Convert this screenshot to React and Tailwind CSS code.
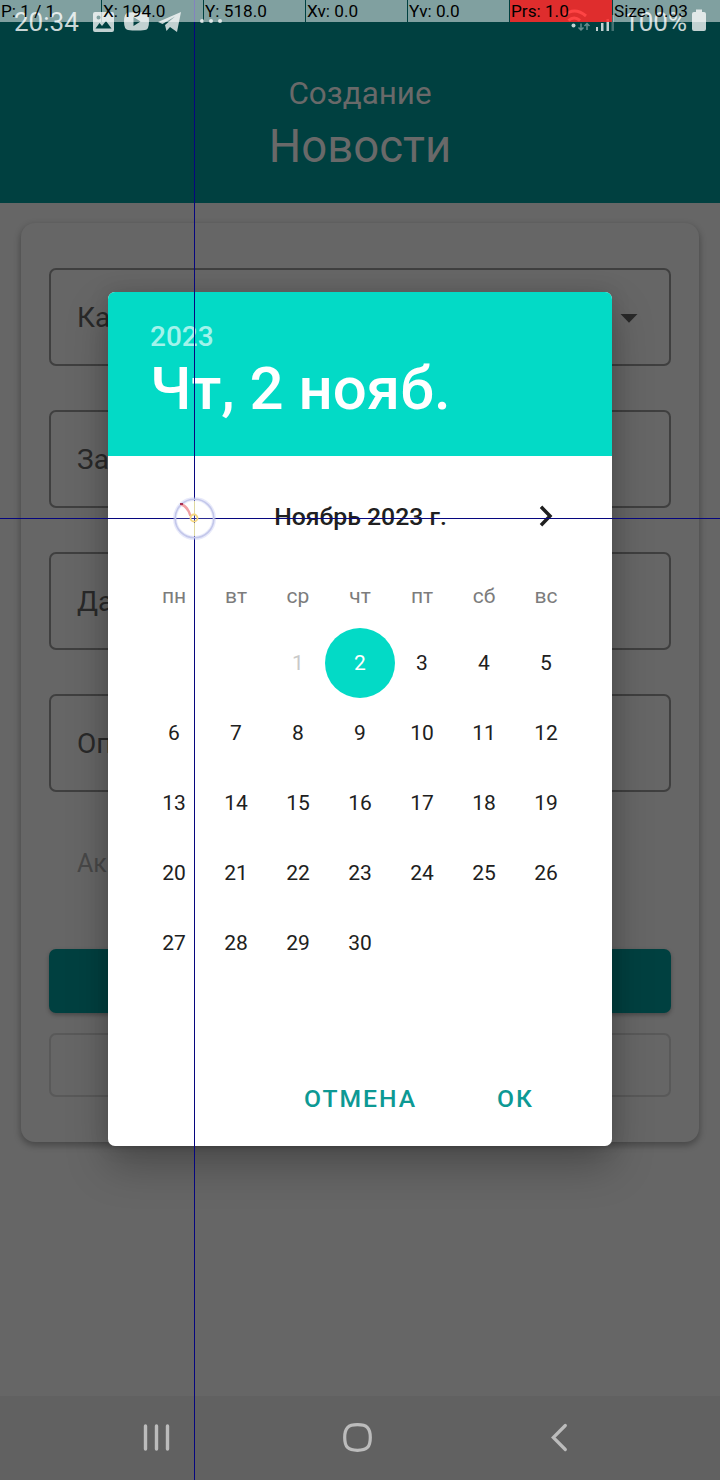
import React from "react";

const WEEKDAYS = ["пн", "вт", "ср", "чт", "пт", "сб", "вс"];
const DAYS = Array.from({ length: 30 }, (_, i) => i + 1);
const METRICS = ["P: 1 / 1", "X: 194.0", "Y: 518.0", "Xv: 0.0", "Yv: 0.0", "Prs: 1.0", "Size: 0.03"];

function Field({ label, dropdown }) {
  return (
    <div className="flex h-[98px] items-center justify-between rounded-[7px] border-2 border-[#3f3f3f] pt-[2px] pr-[31px] pl-[26px] text-[28px] text-[#292929]">
      <span>{label}</span>
      {dropdown && (
        <svg width="18" height="9" viewBox="0 0 18 9">
          <path d="M0.500 0H17.500L9 8.700Z" fill="#292929" />
        </svg>
      )}
    </div>
  );
}

function FormPage() {
  return (
    <div className="flex h-[1480px] flex-col">
      <header className="flex h-[203px] flex-col items-center bg-[#004040] pt-[73px] text-[#696969]">
        <div className="text-[31.4px] leading-[42px]">Создание</div>
        <div className="text-[45.5px] leading-[64px]">Новости</div>
      </header>
      <main className="flex-1 px-[21px] pt-[20px]">
        <section className="flex h-[919px] flex-col rounded-[14px] bg-[#666666] px-[28px] pt-[45px] shadow-[0_3px_6px_1px_rgba(0,0,0,0.28)]">
          <div className="flex flex-col gap-[44px]">
            <Field label="Ка" dropdown />
            <Field label="За" />
            <Field label="Да" />
            <Field label="Оп" />
          </div>
          <div className="mt-[52px] pl-[28px] text-[25px] leading-[40px] text-[#484848]">Ак</div>
          <div className="mt-[65px] h-[64px] rounded-[7px] bg-[#004040] shadow-[0_2px_4px_rgba(0,0,0,0.3)]" />
          <div className="mt-[20px] h-[64px] rounded-[7px] border-2 border-[#595959]" />
        </section>
      </main>
      <nav className="flex h-[84px] items-center bg-[#616161]">
        <svg width="720" height="84" viewBox="0 0 720 84" fill="none" stroke="#bcbcbc" strokeLinecap="round">
          <path d="M145.500 30V53M156.500 30V53M167.500 30V53" strokeWidth="3.400" />
          <path d="M357.500 28.700C367 28.700 370.300 32 370.300 41.500S367 54.300 357.500 54.300S344.700 51 344.700 41.500S348 28.700 357.500 28.700Z" strokeWidth="3.200" />
          <path d="M565.300 29.500L553.300 41.500L565.300 53.500" strokeWidth="3.200" />
        </svg>
      </nav>
    </div>
  );
}

function DatePicker() {
  return (
    <div className="h-[854px] w-[504px] overflow-hidden rounded-[7px] bg-white">
      <div className="h-[164px] bg-[#03dac6] px-[42px] pt-[28px] font-medium">
        <div className="text-[28px] leading-[34px] text-[#a2f3eb]">2023</div>
        <div className="text-[60px] leading-[69px] whitespace-nowrap text-white">Чт, 2 нояб.</div>
      </div>
      <div className="flex h-[121px] items-center justify-center text-[24.8px] font-medium text-[#202020]">
        <span className="ml-[73px] flex-1 pt-px pl-[67px] text-center">Ноябрь 2023 г.</span>
        <svg className="mr-[59px] mb-[2px] ml-[66px]" width="14" height="22" viewBox="0 0 14 22">
          <path d="M2 1.800L11 11L2 20.200" fill="none" stroke="#202020" strokeWidth="3.500" />
        </svg>
      </div>
      <div className="grid grid-cols-7 px-[35px] text-center text-[21px]">
        {WEEKDAYS.map((d) => (
          <div key={d} className="mb-[13px] h-[38px] leading-[38px] text-[#7c7c7c]">{d}</div>
        ))}
        <span />
        <span />
        {DAYS.map((d) => (
          <div key={d} className="flex h-[70px] items-center justify-center">
            {d === 2 ? (
              <span className="flex size-[70px] shrink-0 items-center justify-center rounded-full bg-[#03dac6] pt-[2px] text-white">2</span>
            ) : (
              <span className={d === 1 ? "pt-[2px] text-[#c9c9c9]" : "pt-[2px] text-[#202020]"}>{d}</span>
            )}
          </div>
        ))}
      </div>
      <div className="mt-[70px] flex h-[98px] items-center justify-end gap-[80px] pt-[3px] pr-[78px] text-[24.7px] font-medium tracking-[2px] text-[#0d9994]">
        <span>ОТМЕНА</span>
        <span>ОК</span>
      </div>
    </div>
  );
}

function StatusBar() {
  return (
    <div className="absolute inset-x-0 top-0 h-[44px]">
      <div className="flex h-full items-center justify-between pr-[33px] pl-[14px] text-[26px] text-[#c8d6d6]">
        <span>20:34</span>
        <span>100%</span>
      </div>
      <svg className="absolute inset-0" width="720" height="44" viewBox="0 0 720 44" fill="#c2d1d1">
        <path fillRule="evenodd" d="M95 12H112Q114 12 114 14V30Q114 32 112 32H95Q93 32 93 30V14Q93 12 95 12ZM95.500 28.500H111.500L106 21L102 26L99.500 23ZM98.500 15.500A2 2 0 1 0 98.500 19.500A2 2 0 1 0 98.500 15.500Z" />
        <path fillRule="evenodd" d="M128 12.500Q136.500 11.500 145 12.500Q149 13 149 21.500T145 30Q136.500 31 128 30Q124 29.500 124 21.500T128 12.500ZM133.500 17V26L140.500 21.500Z" />
        <path d="M158 22L181 12L177 32L170 27L166.500 31L165 25L175 16.500L162.500 24Z" />
        <circle cx="202" cy="21" r="2" />
        <circle cx="211" cy="21" r="2" />
        <circle cx="220" cy="21" r="2" />
        <g fill="none" stroke="#ffffff" strokeWidth="3">
          <path d="M564 16Q574 6 586 16M568.500 20.500Q574 15.500 580 20.500" />
          <path d="M581 23.500V30M578.500 27.500L581 30L583.500 27.500M587 30V23.500M584.500 26L587 23.500L589.500 26" strokeWidth="1.500" opacity="0.4" />
        </g>
        <circle cx="573.500" cy="25.500" r="2" />
        <path d="M596 27H598V31H596ZM601 23H603.500V31H601ZM606.500 19H609V31H606.500Z" />
        <path d="M611.500 15H614V31H611.500Z" opacity="0.35" />
        <path d="M696 9.500H702V12H704Q706 12 706 14V29Q706 31 704 31H694Q692 31 692 29V14Q692 12 694 12H696Z" />
      </svg>
    </div>
  );
}

function PointerOverlay() {
  return (
    <div className="absolute inset-0 overflow-hidden">
      <div className="absolute top-0 left-[194px] h-full w-px bg-[#06067f]" />
      <div className="absolute top-[518px] left-0 h-px w-full bg-[#06067f]" />
      <svg className="absolute top-[496px] left-[172px]" width="46" height="46" viewBox="0 0 46 46" fill="none">
        <circle cx="22.500" cy="22.500" r="19.500" stroke="#b9bff0" strokeOpacity="0.35" strokeWidth="4" />
        <circle cx="22.500" cy="22.500" r="19.300" fill="#ffffff" fillOpacity="0.15" stroke="#c3c7ea" strokeWidth="1.600" />
        <path d="M9 8Q16 11 18.500 20" stroke="#f0a0a4" strokeWidth="2.500" />
        <rect x="8" y="7" width="3" height="2" fill="#a83050" />
        <path d="M22.500 5V18M22.500 27V40" stroke="#ded8a0" />
        <circle cx="22" cy="22" r="3.500" stroke="#f5d77d" strokeWidth="1.800" />
      </svg>
      <div className="absolute inset-x-0 top-0 flex h-[22px] gap-px text-[17.2px] leading-[23px] text-black">
        {METRICS.map((m, i) => (
          <div
            key={m}
            className={
              i === 5
                ? "w-[102px] shrink-0 bg-[#fe2a2a]/88 pl-px whitespace-nowrap"
                : i === 6
                  ? "flex-1 bg-white/50 pl-px whitespace-nowrap"
                  : "w-[101px] shrink-0 bg-white/50 pl-px whitespace-nowrap"
            }
          >
            {m}
          </div>
        ))}
      </div>
    </div>
  );
}

export default function App() {
  return (
    <div className="relative h-[1480px] w-[720px] overflow-hidden bg-[#666666] font-['Roboto',sans-serif]">
      <FormPage />
      <div className="absolute top-[292px] left-[108px] rounded-[7px] shadow-[0_20px_42px_rgba(0,0,0,0.26),0_0_20px_rgba(0,0,0,0.12)]">
        <DatePicker />
      </div>
      <StatusBar />
      <PointerOverlay />
    </div>
  );
}
